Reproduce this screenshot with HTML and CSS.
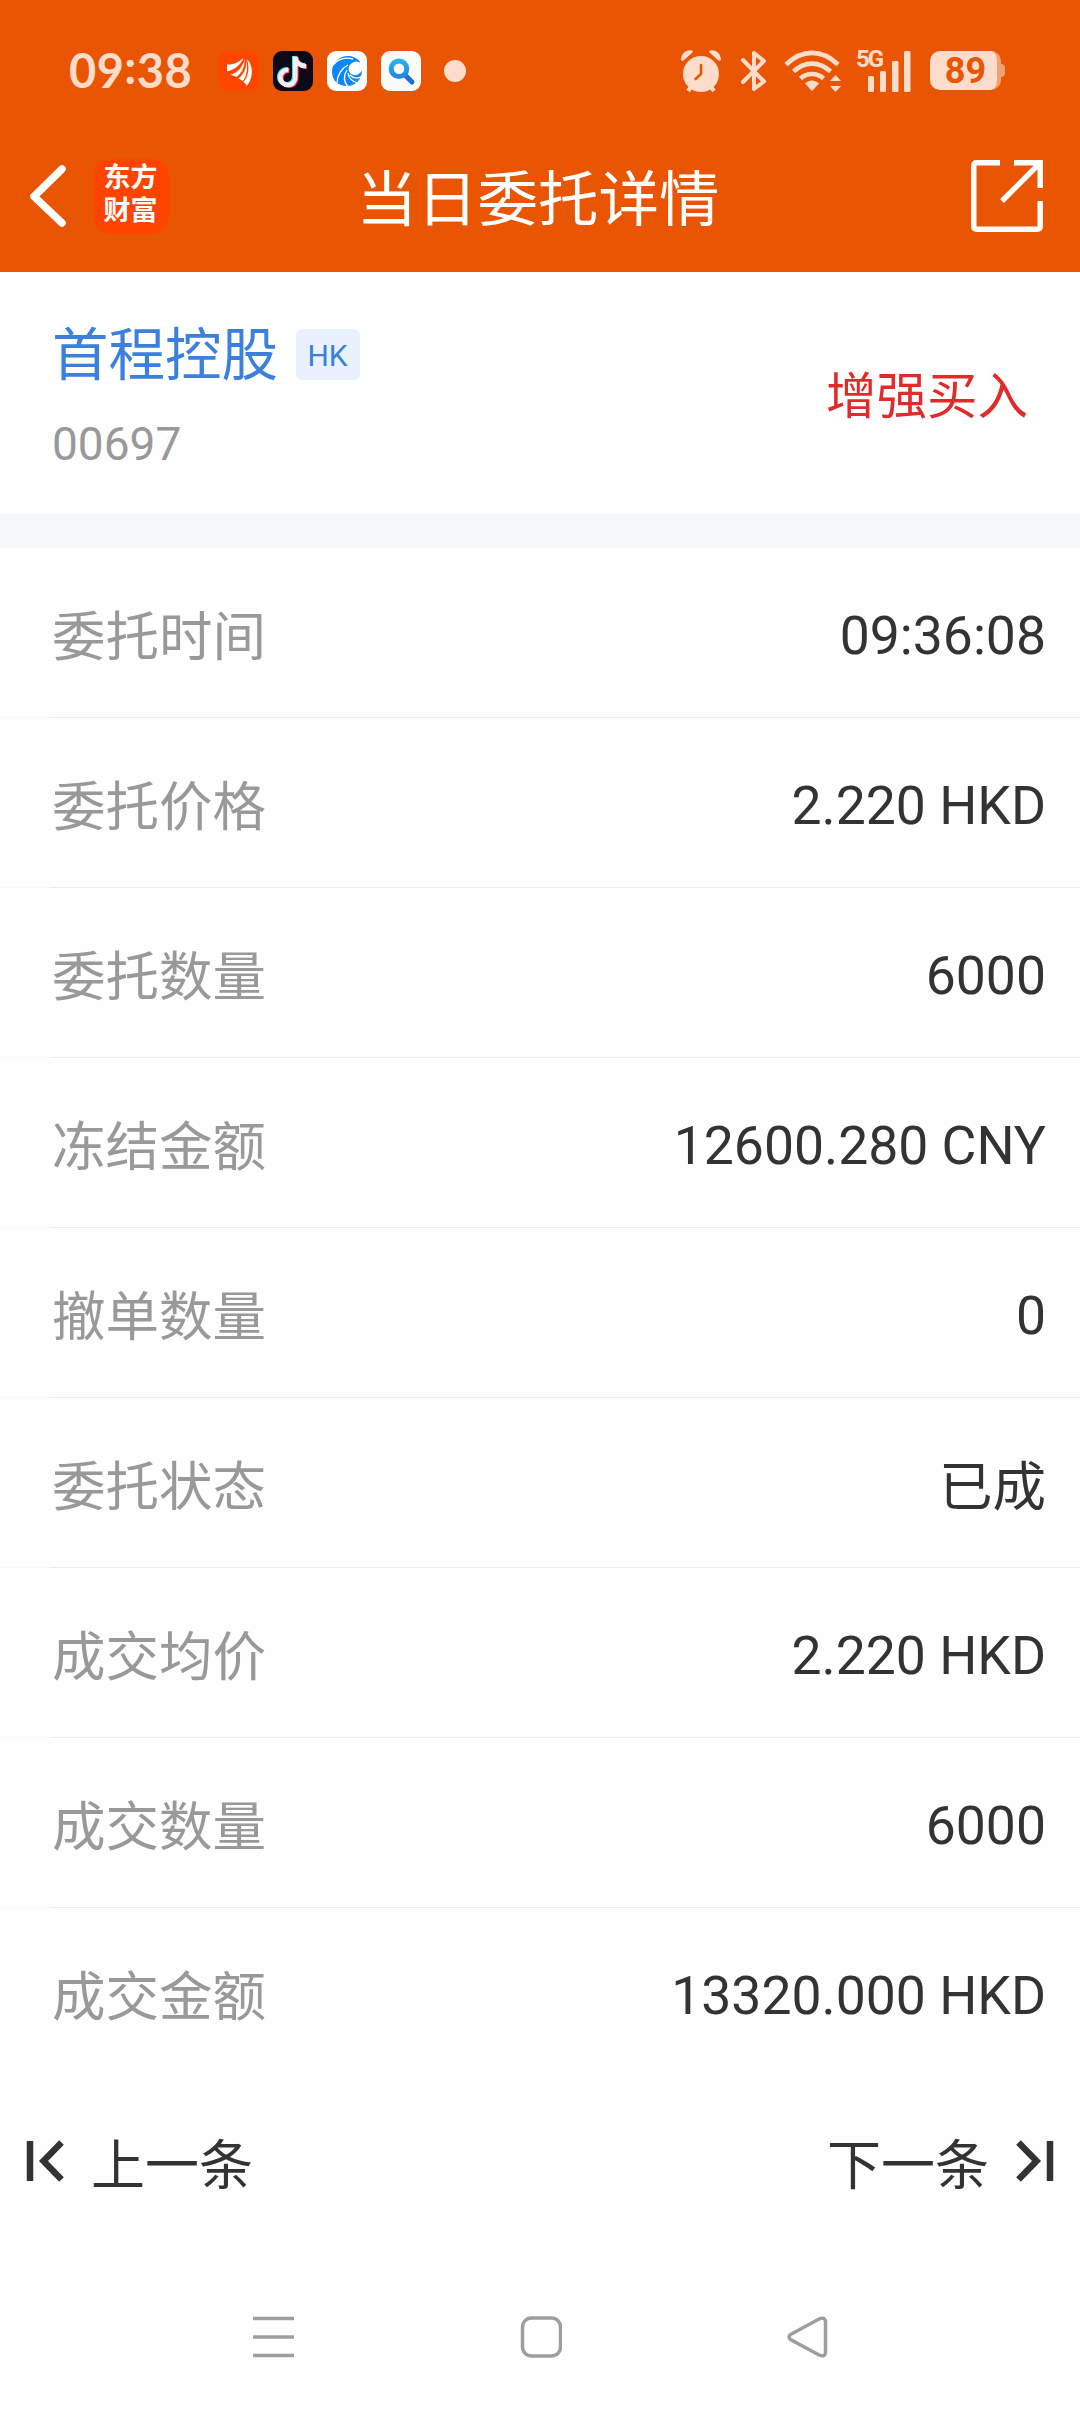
FILE: index.html
```html
<!DOCTYPE html>
<html lang="zh-CN">
<head>
    <meta charset="UTF-8">
    <meta name="viewport" content="width=device-width, initial-scale=1.0">
    <title>当日委托详情</title>
    <link rel="stylesheet" href="styles.css">
</head>
<body>
    <header class="header">
        <div class="status-bar">
            <div class="status-left">
                <span class="clock">09<span class="colon">:</span>38</span>
                <div class="app-icons">
                    <svg width="40" height="40" viewBox="0 0 40 40">
                        <rect width="40" height="40" rx="9" fill="#ff4500"/>
                        <g fill="#fff">
                            <path d="M8 13.500C14 14 20 11 24.500 7C22 13 16 19 8 20.500z"/>
                            <path d="M25.500 8C24 16 18 22.500 11.500 23.500L17.500 26C23 22 26 15 25.500 8z"/>
                            <path d="M26.700 8C28.500 16 25 23 19.500 27.500L24 30C28.500 24 29 15 26.700 8z"/>
                            <path d="M28 8C30.500 16 30 25 24.500 31L28 34.500C34 28 35 15 28 8z"/>
                        </g>
                    </svg>
                    <svg width="40" height="40" viewBox="0 0 40 40">
                        <rect width="40" height="40" rx="9" fill="#0b0a16"/>
                        <g fill="none" stroke-width="4.600">
                            <path d="M21.300 5V25A7.500 7.500 0 1 1 14.500 18.300M21.300 5C22 11 26 14 32 14.500" stroke="#3be8e4"/>
                            <path d="M23.300 6.500V26.500A7.500 7.500 0 1 1 16.500 19.800M23.300 6.500C24 12.500 28 15.500 34 16" stroke="#fb2b55"/>
                            <path d="M22.300 5.700V25.700A7.500 7.500 0 1 1 15.500 19M22.300 5.700C23 12 27 14.800 33 15.300" stroke="#f4eef2"/>
                        </g>
                    </svg>
                    <svg width="40" height="40" viewBox="0 0 40 40">
                        <rect width="40" height="40" rx="9" fill="#fff"/>
                        <path d="M32.500 10C23 0 5 6 5 21C5 30 12 35 20 35C29 35 35 28 35 19C34 22 30 25 27 24C20 23 20 14 26 11.500C29 10 31 10.500 33 12z" fill="#0f86f5"/>
                        <path d="M6 14C11 8 18 6 26 8M21 14C15 17 10 24 10 32M20 19C16 25 17 31 21 36M21 22C22 28 26 31 31 32M23 24C27 28 31 28 35 25" fill="none" stroke="#fff" stroke-width="1.300"/>
                    </svg>
                    <svg width="40" height="40" viewBox="0 0 40 40">
                        <defs>
                            <linearGradient id="lens" x1="0" y1="0" x2="0" y2="1">
                                <stop offset="0" stop-color="#24b2ef"/>
                                <stop offset="1" stop-color="#2389e6"/>
                            </linearGradient>
                        </defs>
                        <rect width="40" height="40" rx="9" fill="#fafafa"/>
                        <path d="M24 24L31 31" stroke="#1b72d4" stroke-width="5" stroke-linecap="round"/>
                        <circle cx="18" cy="17.800" r="7.800" fill="none" stroke="url(#lens)" stroke-width="5"/>
                    </svg>
                </div>
                <span class="more-dot"></span>
            </div>
            <div class="status-right">
                <svg class="alarm" width="42" height="44" viewBox="0 0 42 44">
                    <circle cx="21" cy="25" r="18" fill="#fcdccb"/>
                    <path d="M1 11C1 4 7 0 12 1.500L13 3L3 12zM41 11C41 4 35 0 30 1.500L29 3L39 12z" fill="#fcdccb"/>
                    <path d="M11 38L8 42M31 38L34 42" stroke="#fcdccb" stroke-width="4"/>
                    <path d="M21 16V25L15.500 30" fill="none" stroke="#ea5504" stroke-width="2.600" stroke-linecap="round"/>
                </svg>
                <svg class="bluetooth" width="28" height="44" viewBox="0 0 28 44">
                    <path d="M3 11L24 32.500L14 40V4L24 12L3 33" fill="none" stroke="#fcdccb" stroke-width="4" stroke-linecap="round" stroke-linejoin="round"/>
                </svg>
                <svg class="wifi" width="58" height="44" viewBox="0 0 58 44">
                    <g fill="none" stroke="#fcdccb" stroke-width="4.600">
                        <path d="M2 15.500C18 0 38 0 54 15.500"/>
                        <path d="M9.500 22.500C21 12 35 12 46.500 22.500"/>
                        <path d="M16.500 29.500C23 23.500 33 23.500 39.500 29.500"/>
                    </g>
                    <path d="M21 34.500C25 30.500 31 30.500 35 34.500L28 42z" fill="#fcdccb"/>
                    <path d="M51.500 26L57 32H46zM51.500 43L46 37H57z" fill="#fcdccb"/>
                </svg>
                <div class="signal">
                    <span class="net">5G</span>
                    <svg width="56" height="44" viewBox="0 0 56 44">
                        <g fill="#fcdccb">
                            <rect x="12" y="27" width="6" height="16" rx="1.500"/>
                            <rect x="24" y="22" width="6" height="21" rx="1.500"/>
                            <rect x="36" y="12" width="6.500" height="31" rx="1.500"/>
                            <rect x="48" y="2" width="6.500" height="41" rx="1.500"/>
                        </g>
                    </svg>
                </div>
                <div class="battery"><span class="level">89</span></div>
            </div>
        </div>
        <div class="title-bar">
            <div class="title-left">
                <svg width="38" height="64" viewBox="0 0 38 64">
                    <path d="M33 5L5 32.500L33 59" fill="none" stroke="#fff" stroke-width="7.500" stroke-linecap="round" stroke-linejoin="round"/>
                </svg>
                <div class="logo">东方<br>财富</div>
            </div>
            <h1>当日委托详情</h1>
            <div class="title-right">
                <svg width="72" height="72" viewBox="0 0 72 72">
                    <path d="M29 2.800H6Q2.800 2.800 2.800 6V66Q2.800 69.200 6 69.200H66Q69.200 69.200 69.200 66V41M43 2.800H69.200V28M67 5L31 41" fill="none" stroke="#fff" stroke-width="5.400"/>
                </svg>
            </div>
        </div>
    </header>

    <section class="stock">
        <div>
            <div class="stock-name">首程控股<span class="badge">HK</span></div>
            <div class="stock-code">00697</div>
        </div>
        <div class="side">增强买入</div>
    </section>

    <main class="details">
        <div class="row"><span class="label">委托时间</span><span class="value">09:36:08</span></div>
        <div class="row"><span class="label">委托价格</span><span class="value">2.220 HKD</span></div>
        <div class="row"><span class="label">委托数量</span><span class="value">6000</span></div>
        <div class="row"><span class="label">冻结金额</span><span class="value">12600.280 CNY</span></div>
        <div class="row"><span class="label">撤单数量</span><span class="value">0</span></div>
        <div class="row"><span class="label">委托状态</span><span class="value status">已成</span></div>
        <div class="row"><span class="label">成交均价</span><span class="value">2.220 HKD</span></div>
        <div class="row"><span class="label">成交数量</span><span class="value">6000</span></div>
        <div class="row"><span class="label">成交金额</span><span class="value">13320.000 HKD</span></div>
    </main>

    <div class="pager">
        <div class="pager-item">
            <svg width="40" height="44" viewBox="0 0 40 44">
                <path d="M5 2V42M36.500 3.500L18.500 22L36.500 40.500" fill="none" stroke="#333" stroke-width="6.500"/>
            </svg>
            <span>上一条</span>
        </div>
        <div class="pager-item">
            <span>下一条</span>
            <svg width="40" height="44" viewBox="0 0 40 44">
                <path d="M35 2V42M3.500 3.500L21.500 22L3.500 40.500" fill="none" stroke="#333" stroke-width="6.500"/>
            </svg>
        </div>
    </div>

    <!-- system navigation -->
    <nav class="nav">
        <svg width="42" height="42" viewBox="0 0 42 42">
            <path d="M0 2.500H41M0 21H41M0 39.500H41"/>
        </svg>
        <svg width="42" height="42" viewBox="0 0 42 42">
            <rect x="2.500" y="2" width="38" height="38" rx="9"/>
        </svg>
        <svg width="42" height="42" viewBox="0 0 42 42">
            <path d="M4.500 18.500L33.500 2.800Q39.500 0.500 39.500 6V36Q39.500 41.500 33.500 39.200L4.500 23.500Q1.500 21 4.500 18.500Z"/>
        </svg>
    </nav>
</body>
</html>
```
FILE: styles.css
```css
* {
    box-sizing: border-box;
}
body {
    margin: 0;
    width: 1080px;
    height: 2412px;
    overflow: hidden;
    background-color: #fefefe;
    font-family: Roboto, "Noto Sans CJK SC", sans-serif;
    color: #333;
}
svg {
    display: block;
    flex: none;
}
.header {
    height: 272px;
    background-color: #ea5504;
    color: #fff;
}
.status-bar {
    height: 118px;
    padding: 23px 79px 0 69px;
    display: flex;
    justify-content: space-between;
    align-items: center;
    color: #fcdccb;
}
.status-left,
.status-right {
    display: flex;
    align-items: center;
}
.clock {
    width: 150px;
    padding-bottom: 2px;
    font-family: Lato, sans-serif;
    font-size: 47px;
    font-weight: 700;
    line-height: 46px;
    letter-spacing: 0.4px;
    white-space: nowrap;
}
.colon {
    display: inline-block;
    transform: translateY(-4px);
}
.app-icons {
    display: flex;
    gap: 14px;
}
.more-dot {
    width: 22px;
    height: 22px;
    margin-left: 23px;
    border-radius: 50%;
    background-color: #fcdccb;
}
.bluetooth {
    margin-left: 18px;
}
.wifi {
    margin-left: 16px;
}
.signal {
    position: relative;
    margin-left: 14px;
}
.net {
    position: absolute;
    top: -1px;
    left: 0;
    font-size: 24px;
    font-weight: 700;
    line-height: 22px;
    letter-spacing: -2px;
}
.battery {
    position: relative;
    width: 71px;
    height: 39px;
    margin-left: 18px;
    padding-left: 4px;
    border-radius: 10px;
    border-right: 4px solid #f3a173;
    background-color: #fcdccb;
    color: #ea5504;
    text-align: center;
}
/* battery tip */
.battery::after {
    content: "";
    position: absolute;
    top: 13px;
    right: -8px;
    width: 4px;
    height: 13px;
    border-radius: 0 4px 4px 0;
    background-color: #f3a173;
}
.level {
    font-size: 36px;
    font-weight: 700;
    line-height: 41px;
}
.title-bar {
    height: 154px;
    padding: 2px 37px 0 29px;
    display: grid;
    grid-template-columns: 1fr auto 1fr;
    align-items: center;
}
.title-left {
    display: flex;
    align-items: center;
    gap: 27px;
}
.title-right {
    display: flex;
    justify-content: flex-end;
}
.logo {
    width: 75px;
    height: 75px;
    padding: 3px 2px 0 0;
    border-radius: 17px;
    background-color: #ff4400;
    font-size: 27px;
    font-weight: 700;
    line-height: 33px;
    text-align: center;
}
h1 {
    margin: 0 -2px 0 2px;
    padding-top: 10px;
    font-size: 60.5px;
    font-weight: 400;
    line-height: 80px;
}
.stock {
    height: 276px;
    padding: 0 52px;
    display: flex;
    justify-content: space-between;
    border-bottom: 34px solid #f6f8fa;
}
.stock-name {
    margin-top: 44px;
    display: flex;
    align-items: center;
    font-size: 56.5px;
    line-height: 80px;
    color: #3a80dc;
}
.badge {
    width: 64px;
    height: 51px;
    margin: -4px 0 0 18px;
    padding-right: 1px;
    border-radius: 6px;
    background-color: #e8f1fc;
    font-size: 30px;
    line-height: 53px;
    text-align: center;
}
.stock-code {
    margin-top: 18px;
    font-size: 46px;
    line-height: 60px;
    color: #999;
}
.side {
    margin-top: 85px;
    font-size: 50.5px;
    line-height: 80px;
    color: #e12b2b;
}
.row {
    height: 170px;
    padding: 0 34px 0 52px;
    display: flex;
    justify-content: space-between;
    align-items: center;
    border-bottom: 1px solid #ececec;
    border-image: linear-gradient(to right, #f8f8f8 51px, #ececec 51px) 1;
}
.row:last-child {
    border-bottom-color: transparent;
    border-image: none;
}
.label {
    margin-top: -1px;
    font-size: 53.5px;
    color: #999;
}
.value {
    padding-top: 5px;
    font-size: 53.5px;
}
.status {
    padding-top: 0;
}
.pager {
    height: 170px;
    padding: 0 25px 4px 25px;
    display: flex;
    justify-content: space-between;
    align-items: center;
}
.pager-item {
    display: flex;
    align-items: center;
    gap: 26px;
    font-size: 54px;
}
.nav {
    height: 164px;
    padding: 14px 252px 0 253px;
    display: flex;
    justify-content: space-between;
    align-items: center;
}
.nav svg {
    fill: none;
    stroke: #9e9e9e;
    stroke-width: 3.5;
}
```
